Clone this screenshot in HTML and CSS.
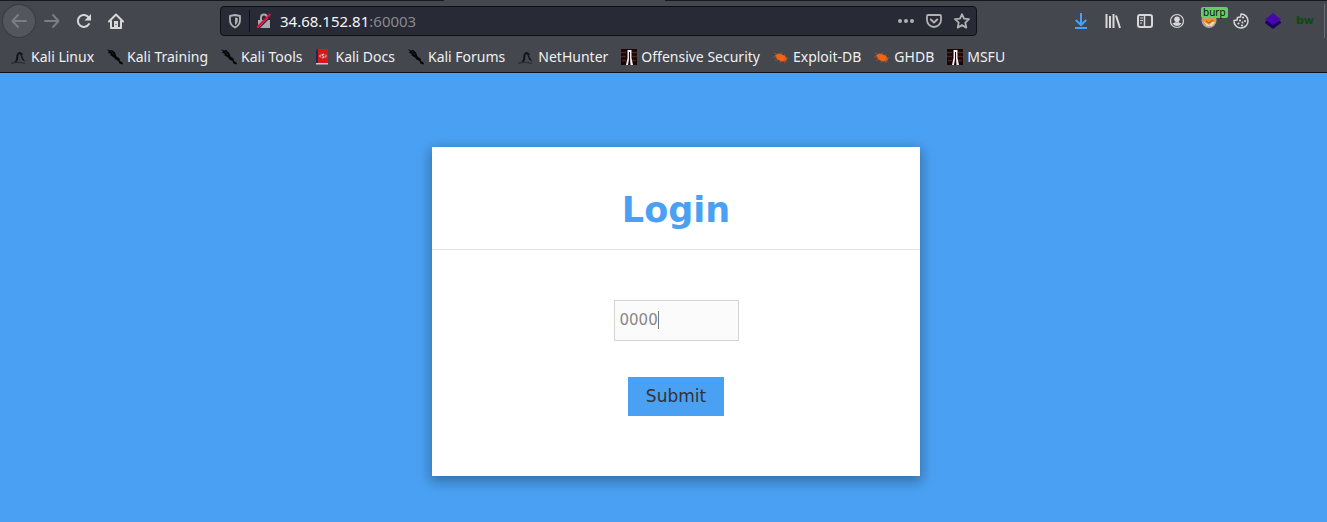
FILE: index.html
```html
<!DOCTYPE html>
<html lang="en">
<head>
<meta charset="utf-8">
<title>Login</title>
<link rel="stylesheet" href="styles.css">
</head>
<body>
<svg class="defs" aria-hidden="true">
  <symbol id="dragon" viewBox="0 0 16 16"><path d="M1 14.500c2-1 3-2 4-4L5.500 6C6 4 7.500 2.500 9 3l2 1 1.500 2-2-.5L12 9l2.500 4-3.500-2.500L9.500 6C8.500 4.500 7.500 5 7.500 6.500L7 11l-2 2.500z" fill="#131416"/><path d="M0 14.500c4-1.500 9-1.500 14 0" fill="none" stroke="#2b2d32" stroke-width="1.200"/></symbol>
  <symbol id="kali" viewBox="0 0 16 16"><path d="M0 0l3 1.500L5 1l3 2.500 1.500 4 3 2 .5 2.500 3 2-.5 1.500-3-1-1-2.500-3-1.500-1.500-2L3 6l1-1L1 3.500l1-1z" fill="#050505"/><path d="M0 3l4 3M4 2l3 4" stroke="#303238" stroke-width=".6"/></symbol>
  <symbol id="docs" viewBox="0 0 16 16"><path d="M1 1l2-1h10v14H1z" fill="#d9161b"/><path d="M1 1l2-1v14H1z" fill="#20294d"/><path d="M1 14h12v1.500H1z" fill="#d6c5c6"/><path d="M6 5.500L4.500 7 6 8.500M10 5.500L11.500 7 10 8.500M9 5l-2 .5v1l2 1v1L7 9" fill="none" stroke="#f7d5d5"/></symbol>
  <symbol id="offsec" viewBox="0 0 16 16"><path d="M0 0h16v16H0z" fill="#190607"/><path d="M0 3.500h5M11 3.500h5M0 7.500h5M11 7.500h5M1 11.500h4M11 11.500h4" stroke="#4b2426" stroke-width="1.500"/><path d="M5 16l1.500-7V1h4v8l1.500 7h-2.500L9 9.500V3H8v7L7 16z" fill="#f4f1ee"/></symbol>
  <symbol id="bug" viewBox="0 0 16 16"><path d="M2 6.500l3-2 3 .5 4 2 2 3-1.500 2-4 .5-4-2z" fill="#f26313"/><path d="M1 4l4 2M0 8l4 0M2 11.500l4-1.500M7 13.500l1-2M12 14l-1-3M8 3v3M12 5l-1 2M15.500 9l-4 0M14 12.500l-3-2" fill="none" stroke="#b25a2c" stroke-width=".7"/></symbol>
</svg>

<header class="browser">
  <div class="toolbar">
    <nav class="tools" aria-label="Navigation">
      <button class="tool back" aria-label="Back"><svg viewBox="0 0 16 16"><path d="M15 8H1.500M7 2L1.500 8 7 14" fill="none" stroke="#7c7d82" stroke-width="2" stroke-linecap="round" stroke-linejoin="round"/></svg></button>
      <button class="tool" aria-label="Forward"><svg viewBox="0 0 16 16"><path d="M1 8h13.500M9 2l5.500 6L9 14" fill="none" stroke="#7c7d82" stroke-width="2" stroke-linecap="round" stroke-linejoin="round"/></svg></button>
      <button class="tool" aria-label="Reload"><svg viewBox="0 0 16 16"><path d="M12.800 4.500A6 6 0 1 0 13 11" fill="none" stroke="#d8d8d9" stroke-width="2" stroke-linecap="round"/><path d="M15 1v6.500H8.500z" fill="#d8d8d9"/></svg></button>
      <button class="tool" aria-label="Home"><svg viewBox="0 0 16 16"><path d="M1 8.500L8 1.500l7 7M3 8v7h10V8" fill="none" stroke="#d8d8d9" stroke-width="2" stroke-linecap="round" stroke-linejoin="round"/><path d="M6 8h4v7H6z" fill="#d8d8d9"/><path d="M8 11v1" stroke="#44474e"/></svg></button>
    </nav>

    <div class="address">
      <button class="mini" aria-label="Tracking protection"><svg viewBox="0 0 16 16"><path d="M8 2l5 1v4c0 4-2 6-5 7.500C5 13 3 11 3 7V3z" fill="none" stroke="#b1b1b3" stroke-width="1.800" stroke-linejoin="round"/><path d="M8 4.500l2.800.6V7c0 2.500-1 4-2.800 5z" fill="#b1b1b3"/></svg></button>
      <span class="divider"></span>
      <button class="mini" aria-label="Connection not secure"><svg viewBox="0 0 16 16"><path d="M2 7h12v8H2z" fill="#a9aaae"/><path d="M5 7V4.500a3 3 0 0 1 6 0V7" fill="none" stroke="#a9aaae" stroke-width="2"/><path d="M2.500 15.500L15 3" stroke="#282a35" stroke-width="1.500"/><path d="M1 14.500L14.500 1" stroke="#f3063f" stroke-width="2"/></svg></button>
      <span class="url">34.68.152.81<span class="port">:60003</span></span>
      <span class="page-actions">
        <button class="mini" aria-label="Page actions"><svg viewBox="0 0 16 16"><g fill="#b1b1b3"><circle cx="2" cy="8" r="2"/><circle cx="8" cy="8" r="2"/><circle cx="14" cy="8" r="2"/></g></svg></button>
        <button class="mini" aria-label="Save to Pocket"><svg viewBox="0 0 16 16"><path d="M2 2h12c.6 0 1 .4 1 1v4a7 7 0 0 1-14 0V3c0-.6.4-1 1-1z" fill="none" stroke="#b1b1b3" stroke-width="1.800"/><path d="M4.800 6.500L8 9.500l3.200-3" fill="none" stroke="#b1b1b3" stroke-width="2" stroke-linecap="round" stroke-linejoin="round"/></svg></button>
        <button class="mini" aria-label="Bookmark this page"><svg viewBox="0 0 16 16"><path d="M8 1.200l2 4.500 5 .5-3.700 3.400 1 5L8 12.100l-4.300 2.500 1-5L1 6.200l5-.5z" fill="none" stroke="#b1b1b3" stroke-width="1.800" stroke-linejoin="round"/></svg></button>
      </span>
    </div>

    <div class="tools">
      <button class="tool" aria-label="Downloads"><svg viewBox="0 0 16 16"><path d="M8 0v11.500M2.800 7L8 12l5.200-5M2 15h12" fill="none" stroke="#45a1ff" stroke-width="2"/></svg></button>
      <button class="tool" aria-label="Library"><svg viewBox="0 0 16 16"><path d="M1.500 1v14M5 3v12M8.500 1v14M11 2.500L15 15" fill="none" stroke="#d8d8d9" stroke-width="2"/></svg></button>
      <button class="tool" aria-label="Sidebars"><svg viewBox="0 0 16 16"><rect x="1" y="2" width="14" height="12" rx="2" fill="none" stroke="#d8d8d9" stroke-width="2"/><path d="M7.500 2v12" stroke="#d8d8d9" stroke-width="1.500"/><path d="M3 5h3M3 7.500h3M3 10h2" stroke="#d8d8d9"/></svg></button>
      <button class="tool" aria-label="Account"><svg viewBox="0 0 16 16"><circle cx="8" cy="8" r="6.500" fill="none" stroke="#d8d8d9" stroke-width="1.200"/><circle cx="8" cy="6.300" r="2.800" fill="#d8d8d9"/><path d="M3.500 10c2 .3 2-.7 3-.7h3c1 0 1 1 3 .7-1 2-2.500 3-4.500 3s-3.500-1-4.500-3z" fill="#d8d8d9"/></svg></button>
      <button class="tool" aria-label="FoxyProxy: burp"><svg viewBox="0 0 16 16"><circle cx="8" cy="7.500" r="7.500" fill="#a9a7a5"/><path d="M1 5l4 1 3-1 4 1 3-2-1 5-4 3H5L2 9z" fill="#f18d25"/><path d="M2 8l3 2 3 2 3-3 3 0-3 4H6z" fill="#f5d9b7"/><path d="M5 8l3 2 4-3" fill="none" stroke="#a9560b"/></svg><span class="badge">burp</span></button>
      <button class="tool" aria-label="Cookies"><svg viewBox="0 0 16 16"><path d="M8 1a7 7 0 1 1-7 6.500L4 7l.5-2.500L7.500 4z" fill="none" stroke="#d8d8d9" stroke-width="1.500" stroke-linejoin="round"/><g fill="#d8d8d9"><circle cx="10" cy="4.500" r="1.100"/><circle cx="7" cy="7.500" r="1.100"/><circle cx="12" cy="8" r="1.100"/><circle cx="9.500" cy="9.500" r="1"/><circle cx="5.500" cy="10.500" r="1.100"/><circle cx="9" cy="12.500" r="1.100"/></g></svg></button>
      <button class="tool" aria-label="Wappalyzer"><svg viewBox="0 0 16 16"><path d="M0 9l8-6 8 6v1l-8 6-8-6z" fill="#1b0264"/><path d="M8 0l8 6.500L8 12 0 6.500z" fill="#4608ad"/></svg></button>
      <button class="tool builtwith" aria-label="BuiltWith">bw</button>
    </div>
    <span class="edge"></span>
  </div>

  <nav class="bookmarks" aria-label="Bookmarks">
    <a href="#"><svg><use href="#dragon"/></svg>Kali Linux</a>
    <a href="#"><svg><use href="#kali"/></svg>Kali Training</a>
    <a href="#"><svg><use href="#kali"/></svg>Kali Tools</a>
    <a href="#"><svg><use href="#docs"/></svg>Kali Docs</a>
    <a href="#"><svg><use href="#kali"/></svg>Kali Forums</a>
    <a href="#"><svg><use href="#dragon"/></svg>NetHunter</a>
    <a href="#"><svg><use href="#offsec"/></svg>Offensive Security</a>
    <a href="#"><svg><use href="#bug"/></svg>Exploit-DB</a>
    <a href="#"><svg><use href="#bug"/></svg>GHDB</a>
    <a href="#"><svg><use href="#offsec"/></svg>MSFU</a>
  </nav>
</header>

<main class="page">
  <section class="login">
    <h1>Login</h1>
    <form>
      <div class="pin"><input type="text" value="0000" aria-label="PIN"><span class="caret"></span></div>
      <button class="submit" type="button">Submit</button>
    </form>
  </section>
</main>
</body>
</html>
```

FILE: styles.css
```css
* { box-sizing: border-box; }
body {
  margin: 0;
  min-height: 100vh;
  display: flex;
  flex-direction: column;
  background: #4aa1f3;
  font-family: "Noto Sans", sans-serif;
}
button { border: 0; padding: 0; background: none; font: inherit; }
svg { display: block; width: 16px; height: 16px; flex: none; }
.defs { position: absolute; width: 0; height: 0; }

.browser {
  background: linear-gradient(to right, #18191f 444px, #44474e 444px, #44474e 665px, #18191f 665px) top / 100% 1px no-repeat #44474e;
  border-bottom: 1px solid #111217;
}
.toolbar { display: flex; align-items: center; height: 42px; padding-left: 3px; }
.tools { display: flex; align-items: center; }
.tool {
  position: relative;
  display: flex;
  align-items: center;
  justify-content: center;
  width: 32px;
  height: 32px;
}
.back { border-radius: 50%; background: #54565e; box-shadow: 0 0 0 1px #393b43; margin-right: 1px; }
.edge { width: 1px; height: 34px; margin: 0 2px 0 3px; background: #696b72; }

.address {
  flex: 1;
  display: flex;
  align-items: center;
  height: 30px;
  margin: 0 88px;
  padding: 0 6px;
  border: 1px solid #0f1015;
  border-radius: 4px;
  background: #282a35;
}
.divider { width: 1px; height: 22px; margin: 0 6px; background: #0f1015; }
.url { margin-left: 8px; font-size: 15px; line-height: 20px; color: #f6f6f7; }
.port { color: #88898f; }
.page-actions { display: flex; gap: 12px; margin-left: auto; }

.badge {
  position: absolute;
  top: 2px;
  left: 8px;
  padding: 0 2px;
  border-radius: 2px;
  background: #66cc66;
  color: #111;
  font-size: 10px;
  line-height: 11px;
}
.builtwith { color: #0d4a0d; font: 700 11px/16px "DejaVu Sans", sans-serif; }

.bookmarks { display: flex; align-items: center; gap: 13px; height: 30px; padding-left: 11px; }
.bookmarks a {
  display: flex;
  align-items: center;
  gap: 4px;
  color: #f0f0f1;
  font-size: 14px;
  line-height: 20px;
  text-decoration: none;
  white-space: nowrap;
}

.page { flex: 1; padding: 74px 0 46px 25px; }
.login {
  width: 37%;
  min-width: 488px;
  margin: 0 auto;
  background: #fff;
  box-shadow: 0 4px 12px 2px rgba(0, 0, 0, 0.3);
}
h1 {
  margin: 0;
  padding: 43px 0 18px;
  border-bottom: 1px solid #e4e4e4;
  color: #4aa1f3;
  font: 700 35px/41px "DejaVu Sans", sans-serif;
  text-align: center;
}
form { display: flex; flex-direction: column; align-items: center; gap: 36px; padding: 50px 0 60px; }
.pin { position: relative; }
.pin input {
  display: block;
  width: 125px;
  height: 41px;
  padding: 0 5px 2px;
  border: 1px solid #d3d3d3;
  background: #fbfbfb;
  color: #888;
  font: 15px/20px "DejaVu Sans", sans-serif;
}
.caret { position: absolute; left: 44px; top: 11px; width: 1px; height: 18px; background: #777; }
.submit {
  padding: 0 18px;
  background: #4aa1f3;
  color: #333;
  font: 17px/39px "DejaVu Sans", sans-serif;
}
```
